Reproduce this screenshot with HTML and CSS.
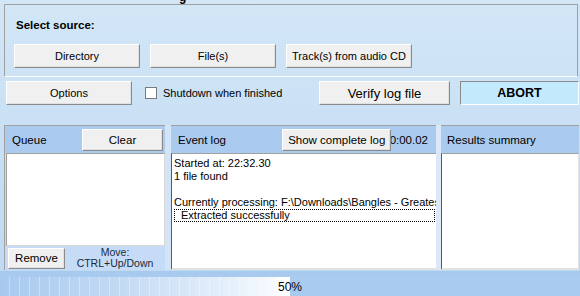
FILE: index.html
```html
<!DOCTYPE html>
<html>
<head>
<meta charset="utf-8">
<link rel="stylesheet" href="styles.css">
</head>
<body>
<div class="app">
  <span class="cut">g</span>
  <div class="source">
    <div class="label">Select source:</div>
    <div class="row">
      <button class="btn wide">Directory</button>
      <button class="btn wide">File(s)</button>
      <button class="btn wide">Track(s) from audio CD</button>
    </div>
  </div>
  <div class="controls">
    <button class="btn wide">Options</button>
    <label class="check"><span class="box"></span>Shutdown when finished</label>
    <button class="btn verify">Verify log file</button>
    <button class="abort">ABORT</button>
  </div>
  <div class="panels">
    <section class="panel queue">
      <div class="phead"><span>Queue</span><button class="btn small clear">Clear</button></div>
      <div class="list"></div>
      <div class="qfoot">
        <button class="btn small remove">Remove</button>
        <div class="move">Move:<br>CTRL+Up/Down</div>
      </div>
    </section>
    <div class="split"></div>
    <section class="panel log">
      <div class="phead"><span>Event log</span><button class="btn small showlog">Show complete log</button><span class="time">00:00.02</span></div>
      <div class="logbody">
        <div>Started at: 22:32.30</div>
        <div>1 file found</div>
        <div>&nbsp;</div>
        <div>Currently processing: F:\Downloads\Bangles - Greates</div>
        <div class="focus">Extracted successfully</div>
      </div>
    </section>
    <div class="split light"></div>
    <section class="panel results">
      <div class="phead"><span>Results summary</span></div>
      <div class="resbody"></div>
    </section>
  </div>
  <div class="progress">
    <div class="fill" style="width:50%"></div>
    <span class="pct">50%</span>
  </div>
</div>
</body>
</html>
```
FILE: styles.css
```css
* { box-sizing: border-box; }
html, body { margin: 0; padding: 0; }
body {
  width: 580px;
  height: 296px;
  overflow: hidden;
  font-family: "Liberation Sans", Arial, sans-serif;
  font-size: 11px;
  color: #000;
}
.app {
  position: relative;
  width: 580px;
  height: 296px;
  background: linear-gradient(180deg, #d2e6f6 0%, #c6def4 60%, #bfd9f2 100%);
  padding-top: 4px;
}
.cut {
  position: absolute;
  left: 179px;
  top: -10px;
  font-size: 12px;
  font-weight: bold;
}
.btn {
  font-family: inherit;
  font-size: 11px;
  color: #000;
  background: #f0f0f0;
  border: 1px solid;
  border-color: #ffffff #8a8a8a #8a8a8a #ffffff;
  box-shadow: inset -1px -1px 0 #e0e0e0;
  padding: 0;
  margin: 0;
  height: 24px;
}
.wide { width: 126px; }
.small { height: 22px; }

.source {
  margin: 0 2px 0 4px;
  height: 73px;
  border: 1px solid;
  border-color: #a0a0a0 #a0a0a0 #ffffff #a0a0a0;
  padding: 13px 0 0 9px;
}
.label {
  font-weight: bold;
  font-size: 11.5px;
  line-height: 14px;
  padding-left: 2px;
}
.row {
  display: flex;
  gap: 10px;
  margin-top: 12px;
}

.controls {
  display: flex;
  align-items: center;
  margin: 4px 1px 0 6px;
  height: 24px;
}
.check {
  display: flex;
  align-items: center;
  margin-left: 13px;
  font-size: 11px;
}
.box {
  width: 12px;
  height: 12px;
  background: #fff;
  border: 1px solid #7a7a7a;
  margin-right: 6px;
}
.verify {
  margin-left: auto;
  width: 131px;
  font-size: 13px;
}
.abort {
  margin-left: 10px;
  width: 119px;
  height: 24px;
  background: #c3e9fc;
  border: 1px solid;
  border-color: #8a8a8a #ffffff #ffffff #8a8a8a;
  font-family: inherit;
  font-weight: bold;
  font-size: 12.5px;
  padding: 0;
}

.panels {
  display: flex;
  margin: 20px 1px 0 4px;
  height: 145px;
}
.panel {
  display: flex;
  flex-direction: column;
}
.phead {
  height: 28px;
  display: flex;
  align-items: center;
  background: #aacaef;
  border-top: 1px solid #a0a0a0;
  font-size: 11.5px;
  position: relative;
}
.queue {
  width: 161px;
  border-left: 1px solid #a0a0a0;
}
.queue .phead { padding: 0 2px 0 7px; }
.clear { margin-left: auto; width: 81px; font-size: 11.5px; }
.list {
  height: 93px;
  background: #fff;
  border: 1px solid;
  border-color: #a0a0a0 #d8d8d8 #d8d8d8 #a0a0a0;
  margin-left: 1px;
}
.qfoot {
  flex: 1;
  display: flex;
  align-items: center;
  background: #c6dcf6;
  padding-left: 3px;
}
.remove { width: 57px; height: 21px; font-size: 11.5px; }
.move {
  flex: 1;
  text-align: center;
  font-size: 10.5px;
  line-height: 11px;
  color: #1a2a40;
  padding-bottom: 1px;
}
.split {
  width: 6px;
  background: #d3e4f6;
}
.split.light { width: 5px; background: #dbe8f7; }
.log { width: 265px; }
.log .phead { padding: 0 8px 0 7px; }
.showlog {
  margin-left: auto;
  width: 109px;
  position: relative;
  z-index: 1;
  font-size: 11.5px;
}
.time { margin-left: -8px; font-size: 11.5px; }
.logbody {
  flex: 1;
  background: #fff;
  border-left: 1px solid #5a5a5a;
  border-top: 1px solid #a0a0a0;
  border-bottom: 2px solid #e2e2e2;
  padding: 3px 0 0 2px;
  line-height: 13px;
  font-size: 11px;
  overflow: hidden;
  white-space: nowrap;
}
.focus {
  border: 1px dotted #000;
  width: 261px;
  height: 13px;
  line-height: 11px;
  padding-left: 6px;
}
.results { flex: 1; }
.results .phead { padding-left: 6px; }
.resbody {
  flex: 1;
  background: #fff;
  border-left: 1px solid #5a5a5a;
  border-top: 1px solid #a0a0a0;
  border-bottom: 2px solid #e2e2e2;
  border-right: 1px solid #e2e2e2;
}

.progress {
  position: relative;
  height: 26px;
  background: linear-gradient(180deg, #a7c9ee 0%, #a9cbef 30%, #a7caef 100%);
  margin-top: 1px;
}
.fill {
  position: absolute;
  left: 0;
  bottom: 0;
  height: 20px;
  background:
    repeating-linear-gradient(90deg, transparent 0 9px, rgba(255,255,255,0.35) 9px 10px),
    linear-gradient(90deg, #a8c9ee 0%, #c2d9f3 40%, #e6f0fb 80%, #ffffff 100%);
}
.pct {
  position: absolute;
  left: 0;
  right: 0;
  bottom: 3px;
  text-align: center;
  font-size: 12px;
  line-height: 14px;
}
```
